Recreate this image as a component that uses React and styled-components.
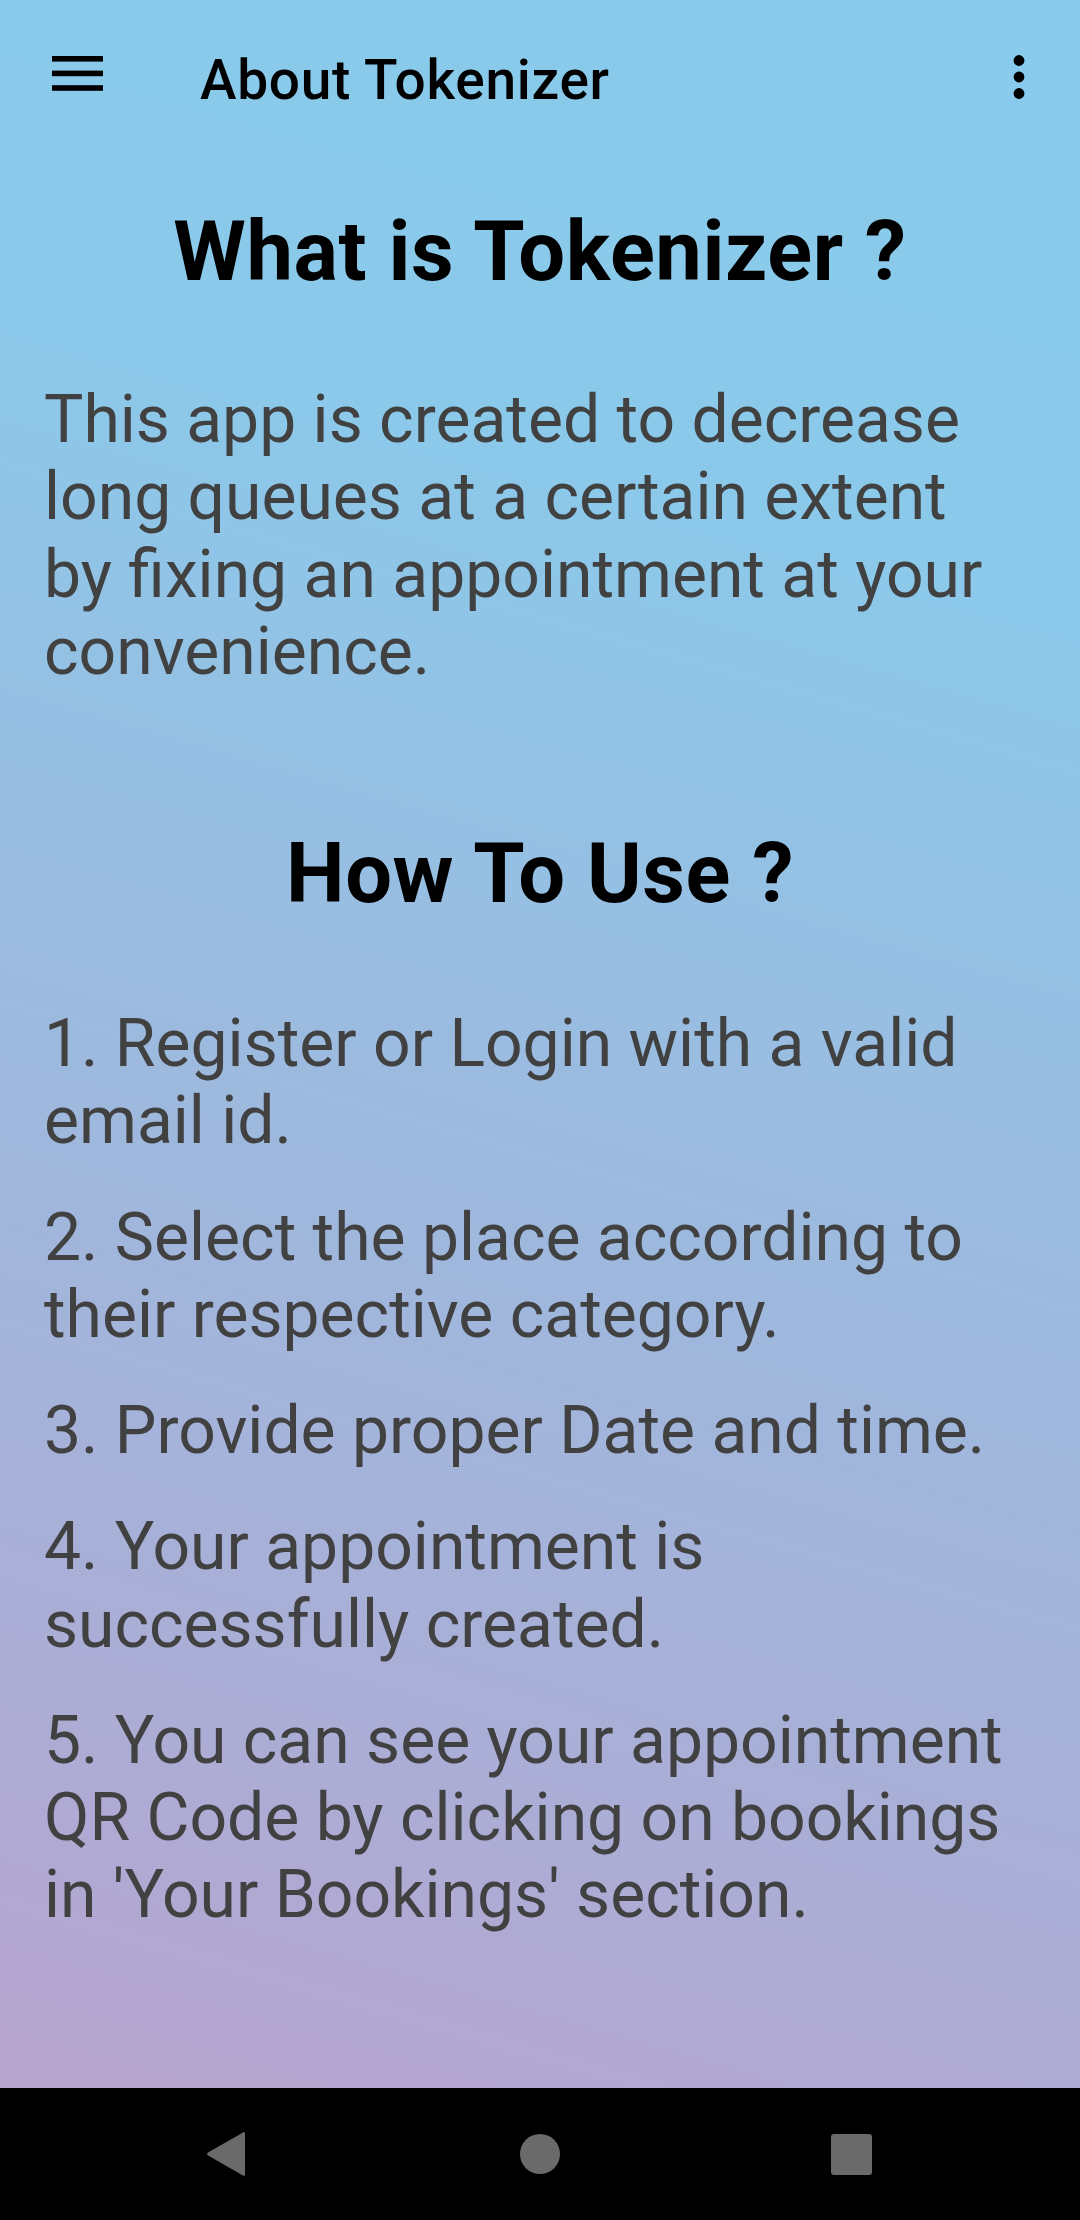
import React from "react";
import styled, { createGlobalStyle } from "styled-components";

const GlobalStyle = createGlobalStyle`
  html, body {
    margin: 0;
    padding: 0;
    background: #000;
  }
  body {
    font-family: Roboto, "Noto Sans", Arial, sans-serif;
  }
`;

const steps = [
  "1. Register or Login with a valid email id.",
  "2. Select the place according to their respective category.",
  "3. Provide proper Date and time.",
  "4. Your appointment is successfully created.",
  "5. You can see your appointment QR Code by clicking on bookings in 'Your Bookings' section.",
];

const MenuIcon = () => (
  <svg width="52" height="36" viewBox="0 0 52 36">
    <rect x="0" y="0" width="51" height="5.6" fill="#000" />
    <rect x="0" y="14.6" width="51" height="5.6" fill="#000" />
    <rect x="0" y="29.2" width="51" height="5.6" fill="#000" />
  </svg>
);

const MoreIcon = () => (
  <svg width="12" height="44" viewBox="0 0 12 44">
    <circle cx="6" cy="5.5" r="5.4" fill="#000" />
    <circle cx="6" cy="22" r="5.4" fill="#000" />
    <circle cx="6" cy="38.5" r="5.4" fill="#000" />
  </svg>
);

const App = () => {
  return (
    <>
      <GlobalStyle />
      <Screen>
        <Main>
          <AppBar>
            <IconBtn>
              <MenuIcon />
            </IconBtn>
            <Title>About Tokenizer</Title>
            <MoreBtn>
              <MoreIcon />
            </MoreBtn>
          </AppBar>

          <Content>
            <Heading>What is Tokenizer ?</Heading>
            <Para>
              This app is created to decrease long queues at a certain extent
              <br />
              by fixing an appointment at your convenience.
            </Para>

            <Heading $top={136}>How To Use ?</Heading>
            <Steps>
              {steps.map((s) => (
                <Para key={s} $top={0}>
                  {s}
                </Para>
              ))}
            </Steps>
          </Content>
        </Main>

        <NavBar>
          <BackKey viewBox="0 0 40 46" width="40" height="46">
            <path
              d="M37 1.5 C38.3 0.5 39 1.5 39 3 L39 43 C39 44.5 38.3 45.5 37 44.5 L2 24.5 C0.8 23.6 0.8 22.4 2 21.5 Z"
              fill="#6a6a6a"
            />
          </BackKey>
          <HomeKey />
          <RecentKey />
        </NavBar>
      </Screen>
    </>
  );
};

const Screen = styled.div`
  width: 1080px;
  height: 2220px;
  display: flex;
  flex-direction: column;
  overflow: hidden;
`;

const Main = styled.div`
  flex: 1;
  display: flex;
  flex-direction: column;
  background: linear-gradient(
    196deg,
    #88cbec 0%,
    #8bc9ea 25%,
    #9abce0 50%,
    #a9afd7 78%,
    #b7a4cf 100%
  );
`;

const AppBar = styled.div`
  height: 154px;
  display: flex;
  align-items: center;
`;

const IconBtn = styled.div`
  width: 52px;
  height: 36px;
  margin-left: 52px;
  margin-top: -6px;
  display: flex;
`;

const Title = styled.div`
  margin-left: 96px;
  padding-top: 6px;
  font-size: 55px;
  font-weight: 500;
  letter-spacing: 0.7px;
  color: #000;
  line-height: 64px;
  flex: 1;
`;

const MoreBtn = styled.div`
  width: 12px;
  height: 44px;
  margin-right: 55px;
  display: flex;
`;

const Content = styled.div`
  padding: 0 44px;
  display: flex;
  flex-direction: column;
`;

const Heading = styled.h1`
  margin: ${(p) => p.$top || 50}px 0 0;
  font-size: 83px;
  font-weight: 700;
  letter-spacing: 0.6px;
  line-height: 96.7px;
  color: #000;
  text-align: center;
`;

const Para = styled.p`
  margin: ${(p) => (p.$top === undefined ? 80 : p.$top)}px 0 0;
  font-size: 66px;
  font-weight: 400;
  line-height: 77.4px;
  color: #414141;
`;

const Steps = styled.div`
  margin-top: 82px;
  display: flex;
  flex-direction: column;
  gap: 38.7px;
`;

const NavBar = styled.div`
  height: 132px;
  background: #000;
  display: flex;
  align-items: center;
`;

const BackKey = styled.svg`
  margin-left: 206px;
`;

const HomeKey = styled.div`
  width: 40px;
  height: 40px;
  border-radius: 50%;
  background: #6a6a6a;
  margin-left: 274px;
`;

const RecentKey = styled.div`
  width: 41px;
  height: 41px;
  border-radius: 3px;
  background: #6a6a6a;
  margin-left: 271px;
`;

export default App;
